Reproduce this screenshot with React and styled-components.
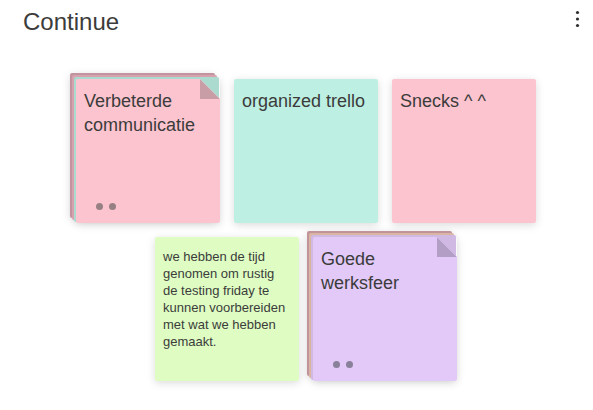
import React from "react";
import styled, { createGlobalStyle, css } from "styled-components";

const GlobalStyle = createGlobalStyle`
  *, *::before, *::after { box-sizing: border-box; }
  body {
    margin: 0;
    background: #ffffff;
    color: #3b3c3b;
    font-family: "Liberation Sans", sans-serif;
  }
`;

const Column = styled.section`
  overflow: hidden;
`;

const Header = styled.header`
  display: flex;
  align-items: flex-start;
  justify-content: space-between;
  padding: 7px 9px 0 23px;
`;

const Title = styled.h1`
  margin: 0;
  font-size: 24px;
  line-height: 30px;
  font-weight: 400;
`;

const MenuButton = styled.button`
  display: flex;
  padding: 0;
  border: 0;
  background: none;
  color: #2e2e2e;
  cursor: pointer;
`;

const Board = styled.ul`
  display: flex;
  flex-wrap: wrap;
  justify-content: center;
  gap: 14px;
  margin: 0;
  padding: 42px 40px 29px 59px;
  list-style: none;
`;

const Stack = styled.li`
  position: relative;
  width: 144px;
  height: 144px;
  border-radius: 2px;
  box-shadow: 0 2px 8px rgba(0, 0, 0, 0.15);
`;

const Sheet = styled.span`
  position: absolute;
  inset: ${({ $depth }) => `-${$depth * 2}px ${$depth * 2 - 1}px ${$depth * 2 - 1}px -${$depth * 2}px`};
  border-radius: 2px;
  background: ${({ $color }) => $color};
  ${({ $depth }) => $depth === 3 && css`box-shadow: 0 2px 8px rgba(0, 0, 0, 0.15);`}
`;

const Note = styled.article`
  position: relative;
  display: flex;
  flex-direction: column;
  justify-content: space-between;
  height: 100%;
  padding: ${({ $small }) => ($small ? 11 : 10)}px 8px 13px;
  border-radius: 2px;
  background: ${({ $color }) => $color};
  ${({ $folded }) => $folded && css`
    clip-path: polygon(0 0, calc(100% - 20px) 0, 100% 20px, 100% 100%, 0 100%);
  `}
`;

const Text = styled.p`
  margin: 0;
  white-space: pre-line;
  font-size: ${({ $small }) => ($small ? 13 : 18)}px;
  line-height: ${({ $small }) => ($small ? 17 : 24)}px;
`;

const Fold = styled.svg`
  position: absolute;
  top: 0;
  right: 0;
`;

const Dots = styled.div`
  display: flex;
  gap: 6px;
  padding-left: 12px;
`;

const Dot = styled.span`
  width: 7px;
  height: 7px;
  border-radius: 50%;
  background: ${({ $color }) => $color};
`;

const notes = [
  {
    text: "Verbeterde communicatie", color: "#fcc4cf",
    sheets: ["#c1949f", "#d5a2ae", "#abdacf"], fold: "#c89da6", dot: "#978084", dots: 2,
  },
  { text: "organized trello", color: "#bdefe2" },
  { text: "Snecks ^ ^", color: "#fcc4cf" },
  {
    text: "we hebben de tijd\ngenomen om rustig\nde testing friday te\nkunnen voorbereiden\nmet wat we hebben\ngemaakt.",
    color: "#dffcc3", small: true,
  },
  {
    text: "Goede werksfeer", color: "#e2c9f7",
    sheets: ["#c1949b", "#dab5a2", "#d0b9e3"], fold: "#b39fc5", dot: "#89809a", dots: 2,
  },
];

function StickyNote({ note }) {
  return (
    <Stack>
      {note.sheets?.map((color, i) => <Sheet key={i} $color={color} $depth={3 - i} />)}
      <Note $color={note.color} $small={note.small} $folded={Boolean(note.fold)}>
        <Text $small={note.small}>{note.text}</Text>
        {note.dots && (
          <Dots>
            {Array.from({ length: note.dots }, (_, i) => <Dot key={i} $color={note.dot} />)}
          </Dots>
        )}
        {note.fold && (
          <Fold width="20" height="20" viewBox="0 0 20 20" aria-hidden="true">
            <path d="M0 0L20 20H0Z" fill={note.fold} />
          </Fold>
        )}
      </Note>
    </Stack>
  );
}

export default function App() {
  return (
    <>
      <GlobalStyle />
      <Column>
        <Header>
          <Title>Continue</Title>
          <MenuButton type="button" aria-label="Column options">
            <svg width="12" height="24" viewBox="0 0 12 24" fill="currentColor" aria-hidden="true">
              <circle cx="5.5" cy="5.5" r="1.6" />
              <circle cx="5.5" cy="12" r="1.6" />
              <circle cx="5.5" cy="18.5" r="1.6" />
            </svg>
          </MenuButton>
        </Header>
        <Board>
          {notes.map((note) => <StickyNote key={note.text} note={note} />)}
        </Board>
      </Column>
    </>
  );
}
